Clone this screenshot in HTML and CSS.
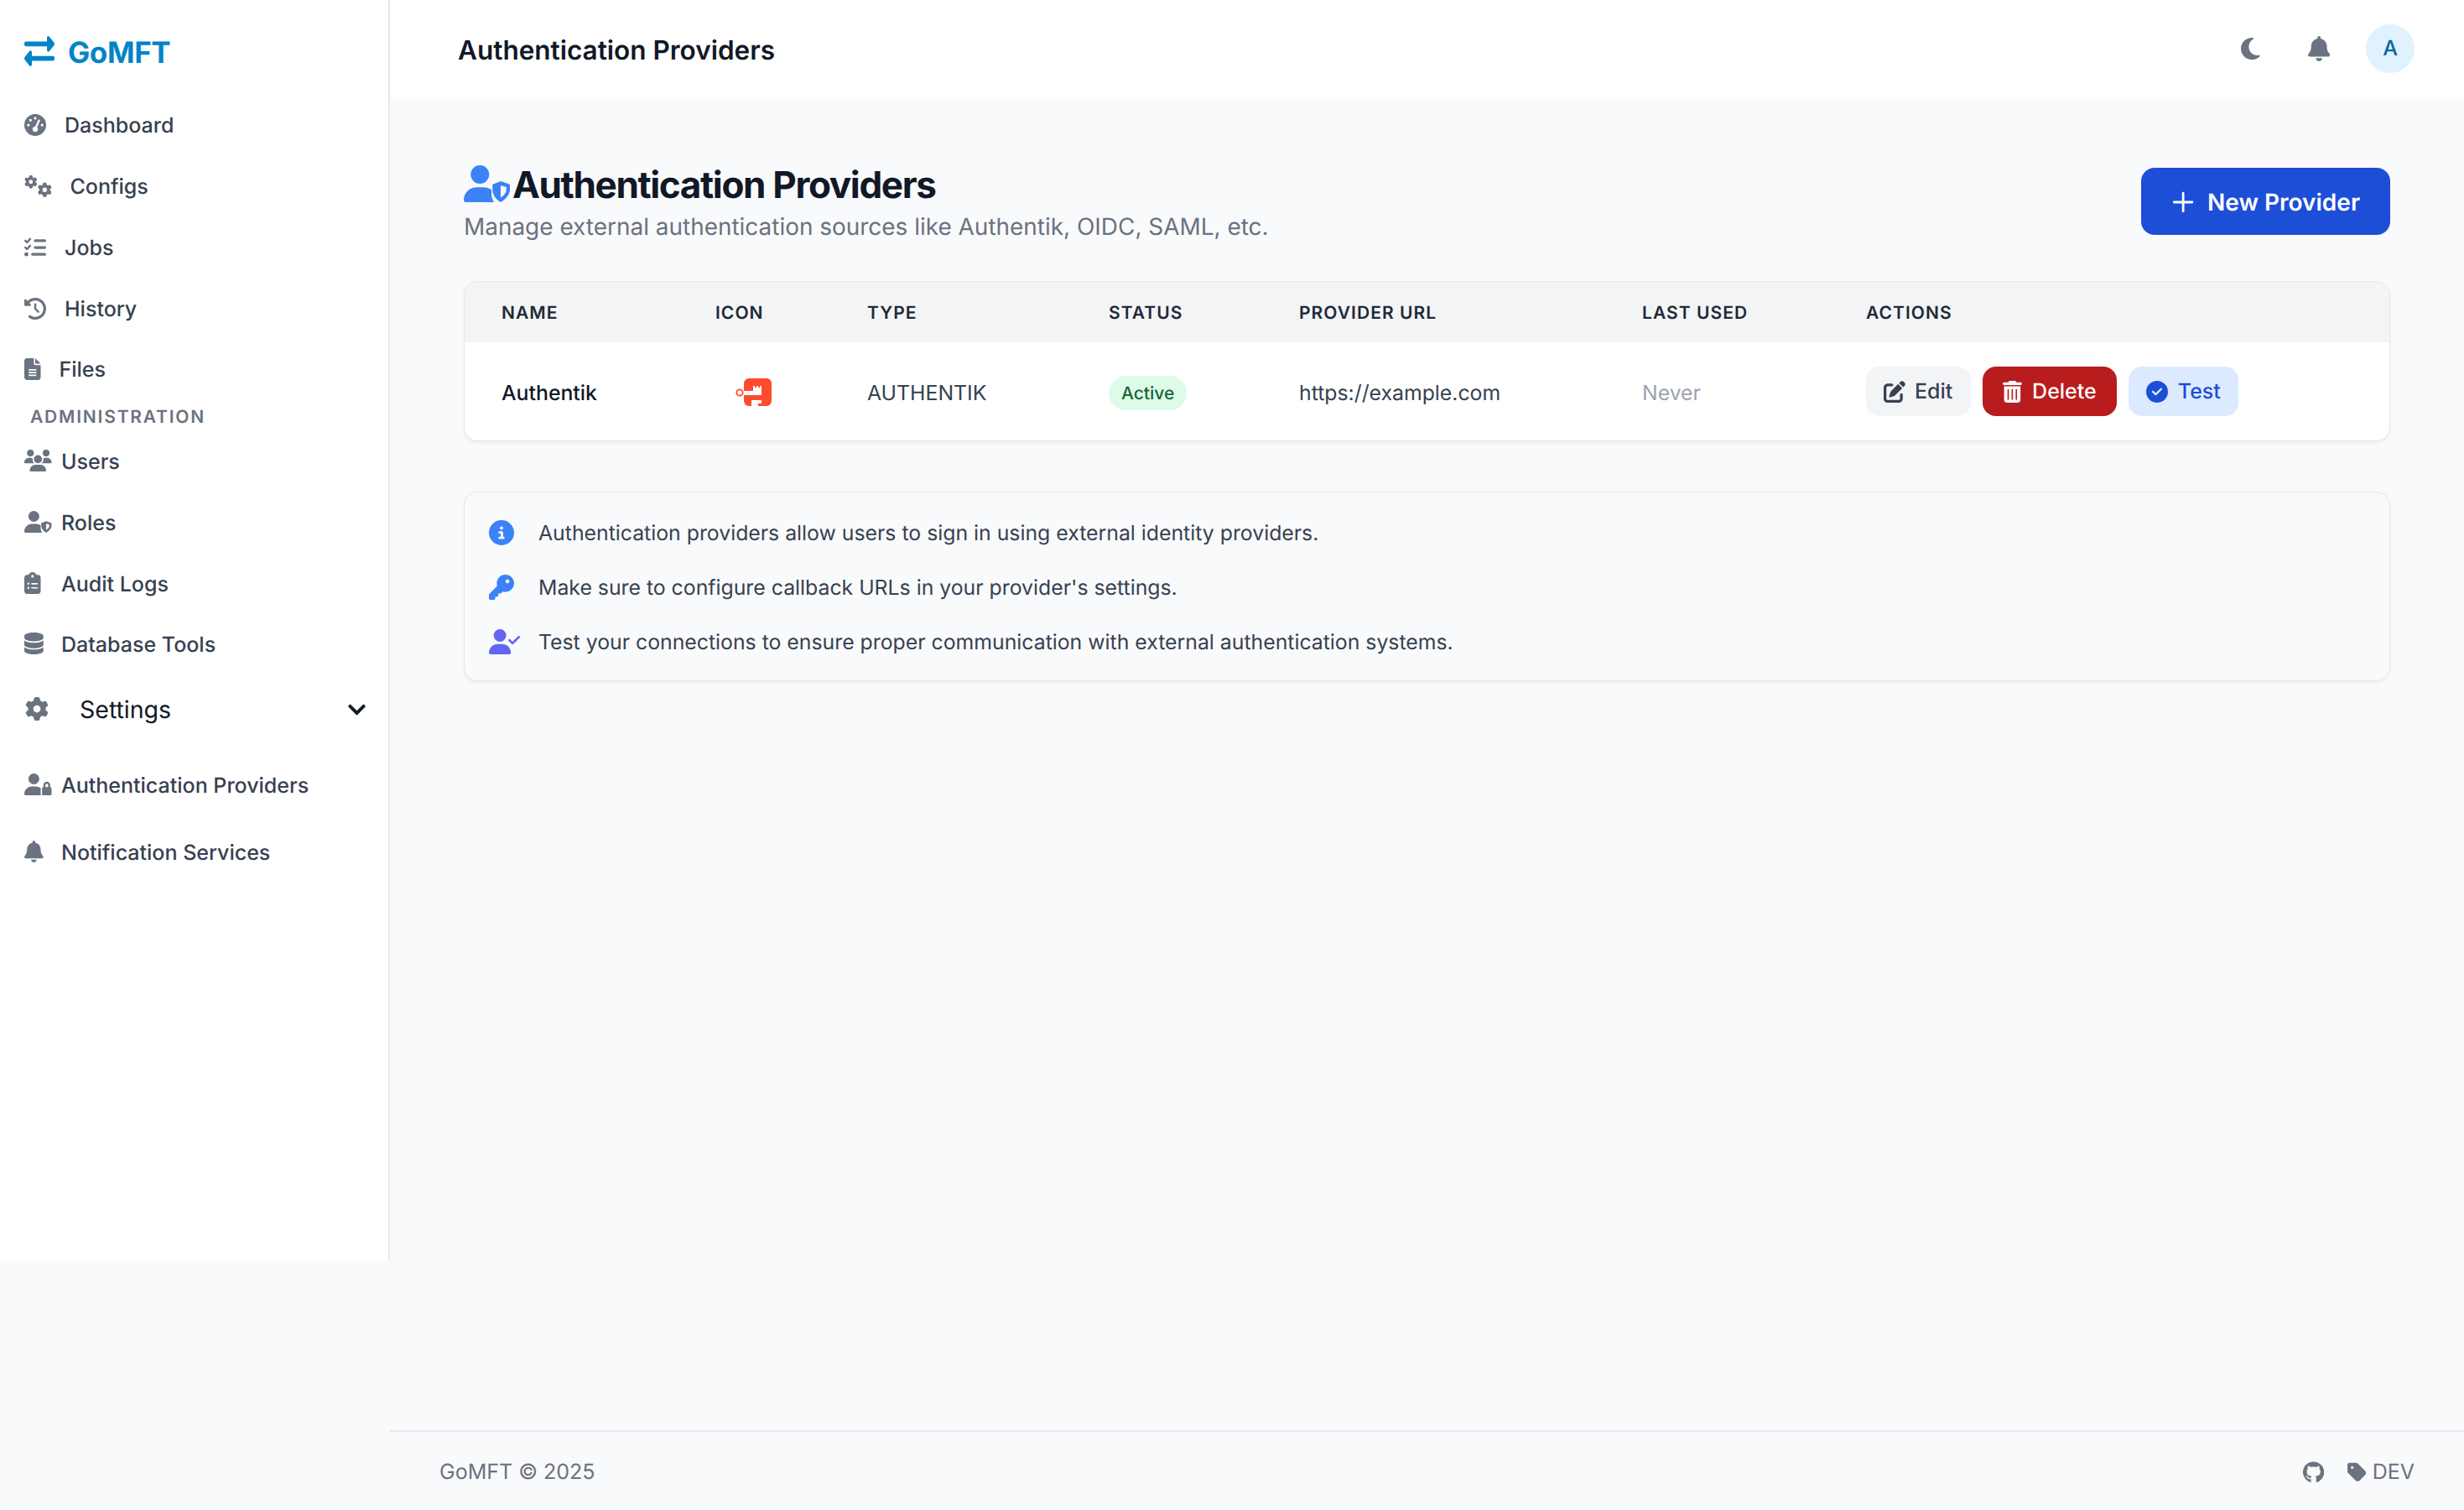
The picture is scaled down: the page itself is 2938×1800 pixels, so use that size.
FILE: index.html
```html
<!DOCTYPE html>
<html lang="en">
<head>
<meta charset="utf-8">
<title>Authentication Providers - GoMFT</title>
<link rel="stylesheet" href="styles.css">
</head>
<body>
<aside class="sidebar">
  <div class="brand">
    <svg class="brand-icon" viewBox="0 56 512 400" preserveAspectRatio="none"><path d="M0 168v-16c0-13.255 10.745-24 24-24h360V80c0-21.367 25.899-32.042 40.971-16.971l80 80c9.372 9.373 9.372 24.569 0 33.941l-80 80C409.956 271.982 384 261.456 384 240v-48H24c-13.255 0-24-10.745-24-24zm488 152H128v-48c0-21.314-25.862-32.08-40.971-16.971l-80 80c-9.372 9.373-9.372 24.569 0 33.941l80 80C102.057 463.997 128 453.437 128 432v-48h360c13.255 0 24-10.745 24-24v-16c0-13.255-10.745-24-24-24z"/></svg>
    <span>GoMFT</span>
  </div>
  <nav class="nav">
    <a class="nav-item"><svg class="nav-icon" viewBox="0 0 512 512"><path d="M0 256a256 256 0 1 1 512 0A256 256 0 1 1 0 256zM288 96a32 32 0 1 0 -64 0 32 32 0 1 0 64 0zM256 416c35.3 0 64-28.7 64-64c0-17.4-6.9-33.1-18.1-44.6L366 161.7c5.3-12.1-.2-26.3-12.3-31.6s-26.3 .2-31.6 12.3L257.9 288c-.6 0-1.3 0-1.9 0c-35.3 0-64 28.7-64 64s28.7 64 64 64zM176 144a32 32 0 1 0 -64 0 32 32 0 1 0 64 0zM96 288a32 32 0 1 0 0-64 32 32 0 1 0 0 64zm352-32a32 32 0 1 0 -64 0 32 32 0 1 0 64 0z"/></svg>Dashboard</a>
    <a class="nav-item"><svg class="nav-icon" viewBox="0 0 640 512"><defs><path id="gear" d="M495.9 166.6c3.2 8.7 .5 18.4-6.4 24.6l-43.3 39.4c1.1 8.3 1.7 16.8 1.7 25.4s-.6 17.1-1.7 25.4l43.3 39.4c6.9 6.2 9.6 15.9 6.4 24.6c-4.4 11.9-9.7 23.3-15.8 34.3l-4.7 8.1c-6.6 11-14 21.4-22.1 31.2c-5.9 7.2-15.7 9.6-24.5 6.8l-55.7-17.7c-13.4 10.3-28.2 18.9-44 25.4l-12.5 57.1c-2 9.1-9 16.3-18.2 17.8c-13.8 2.3-28 3.5-42.5 3.5s-28.7-1.2-42.5-3.5c-9.2-1.5-16.2-8.7-18.2-17.8l-12.5-57.1c-15.8-6.5-30.6-15.1-44-25.4L83.1 425.9c-8.8 2.8-18.6 .3-24.5-6.8c-8.1-9.8-15.5-20.2-22.1-31.2l-4.7-8.1c-6.1-11-11.4-22.4-15.8-34.3c-3.2-8.7-.5-18.4 6.4-24.6l43.3-39.4C64.6 273.1 64 264.6 64 256s.6-17.1 1.7-25.4L22.4 191.2c-6.9-6.2-9.6-15.9-6.4-24.6c4.4-11.9 9.7-23.3 15.8-34.3l4.7-8.1c6.6-11 14-21.4 22.1-31.2c5.9-7.2 15.7-9.6 24.5-6.8l55.7 17.7c13.4-10.3 28.2-18.9 44-25.4l12.5-57.1c2-9.1 9-16.3 18.2-17.8C227.3 1.2 241.5 0 256 0s28.7 1.2 42.5 3.5c9.2 1.5 16.2 8.7 18.2 17.8l12.5 57.1c15.8 6.5 30.6 15.1 44 25.4l55.7-17.7c8.8-2.8 18.6-.3 24.5 6.8c8.1 9.8 15.5 20.2 22.1 31.2l4.7 8.1c6.1 11 11.4 22.4 15.8 34.3zM256 336a80 80 0 1 0 0-160 80 80 0 1 0 0 160z"/></defs><use href="#gear" transform="translate(0 0) scale(.6)"/><use href="#gear" transform="translate(310 170) scale(.66)"/></svg>Configs</a>
    <a class="nav-item"><svg class="nav-icon" viewBox="0 0 512 512"><path d="M152.1 38.2c9.9 8.9 10.7 24 1.8 33.9l-72 80c-4.4 4.9-10.6 7.8-17.2 7.9s-12.9-2.4-17.6-7L7 113C-2.3 103.6-2.3 88.4 7 79s24.6-9.4 33.9 0l22.1 22.1 55.1-61.2c8.9-9.9 24-10.7 33.9-1.8zm0 160c9.9 8.9 10.7 24 1.8 33.9l-72 80c-4.4 4.9-10.6 7.8-17.2 7.9s-12.9-2.4-17.6-7L7 273c-9.4-9.4-9.4-24.6 0-33.9s24.6-9.4 33.9 0l22.1 22.1 55.1-61.2c8.9-9.9 24-10.7 33.9-1.8zM224 96c0-17.7 14.3-32 32-32H480c17.7 0 32 14.3 32 32s-14.3 32-32 32H256c-17.7 0-32-14.3-32-32zm0 160c0-17.7 14.3-32 32-32H480c17.7 0 32 14.3 32 32s-14.3 32-32 32H256c-17.7 0-32-14.3-32-32zM160 416c0-17.7 14.3-32 32-32H480c17.7 0 32 14.3 32 32s-14.3 32-32 32H192c-17.7 0-32-14.3-32-32zM48 368a48 48 0 1 1 0 96 48 48 0 1 1 0-96z"/></svg>Jobs</a>
    <a class="nav-item"><svg class="nav-icon" viewBox="0 0 512 512"><path d="M75 75L41 41C25.9 25.9 0 36.6 0 57.9V168c0 13.3 10.7 24 24 24H134.1c21.4 0 32.1-25.9 17-41l-30.8-30.8C155 85.5 203 64 256 64c106 0 192 86 192 192s-86 192-192 192c-40.8 0-78.6-12.7-109.7-34.4c-14.5-10.1-34.4-6.6-44.6 7.9s-6.6 34.4 7.9 44.6C151.2 495 201.7 512 256 512c141.4 0 256-114.6 256-256S397.4 0 256 0C185.3 0 121.3 28.7 75 75zm181 53c-13.3 0-24 10.7-24 24V256c0 6.4 2.5 12.5 7 17l72 72c9.4 9.4 24.6 9.4 33.9 0s9.4-24.6 0-33.9l-65-65V152c0-13.3-10.7-24-24-24z"/></svg>History</a>
    <a class="nav-item"><svg class="nav-icon" viewBox="0 0 384 512"><path d="M64 0C28.7 0 0 28.7 0 64V448c0 35.3 28.7 64 64 64H320c35.3 0 64-28.7 64-64V160H256c-17.7 0-32-14.3-32-32V0H64zM256 0V128H384L256 0zM112 256H272c8.8 0 16 7.2 16 16s-7.2 16-16 16H112c-8.8 0-16-7.2-16-16s7.2-16 16-16zm0 64H272c8.8 0 16 7.2 16 16s-7.2 16-16 16H112c-8.8 0-16-7.2-16-16s7.2-16 16-16zm0 64H272c8.8 0 16 7.2 16 16s-7.2 16-16 16H112c-8.8 0-16-7.2-16-16s7.2-16 16-16z"/></svg>Files</a>
    <div class="nav-label">ADMINISTRATION</div>
    <a class="nav-item fixed"><span class="icon-box"><svg class="nav-icon" viewBox="0 0 640 512"><path d="M144 0a80 80 0 1 1 0 160A80 80 0 1 1 144 0zM512 0a80 80 0 1 1 0 160A80 80 0 1 1 512 0zM0 298.7C0 239.8 47.8 192 106.7 192h42.7c15.9 0 31 3.5 44.6 9.7c-1.3 7.2-1.9 14.7-1.9 22.3c0 38.2 16.8 72.5 43.3 96c-.2 0-.4 0-.7 0H21.3C9.6 320 0 310.4 0 298.7zM405.3 320c-.2 0-.4 0-.7 0c26.6-23.5 43.3-57.8 43.3-96c0-7.6-.7-15-1.9-22.3c13.6-6.3 28.7-9.7 44.6-9.7h42.7C592.2 192 640 239.8 640 298.7c0 11.8-9.6 21.3-21.3 21.3H405.3zM224 224a96 96 0 1 1 192 0 96 96 0 1 1 -192 0zM128 485.3C128 411.7 187.7 352 261.3 352H378.7C452.3 352 512 411.7 512 485.3c0 14.7-11.9 26.7-26.7 26.7H154.7c-14.7 0-26.7-11.9-26.7-26.7z"/></svg></span>Users</a>
    <a class="nav-item fixed"><span class="icon-box"><svg class="nav-icon" viewBox="0 0 640 512"><path d="M224 256A128 128 0 1 0 224 0a128 128 0 1 0 0 256zm-45.7 48C79.8 304 0 383.8 0 482.3C0 498.7 13.3 512 29.7 512H420c-22-30-36-70-36-115V340c-30-22-70-36-114-36H178.3z"/><path fill-rule="evenodd" d="M512 240L408 282c-6 2-10 8-10 15v50c0 70 50 130 114 165 64-35 128-95 128-165v-50c0-7-4-13-10-15zM512 298v150c38-22 78-58 78-101v-24z"/></svg></span>Roles</a>
    <a class="nav-item fixed"><span class="icon-box"><svg class="nav-icon" viewBox="0 0 384 512"><path d="M192 0c-41.8 0-77.4 26.7-90.5 64H64C28.7 64 0 92.7 0 128V448c0 35.3 28.7 64 64 64H320c35.3 0 64-28.7 64-64V128c0-35.3-28.7-64-64-64H282.5C269.4 26.7 233.8 0 192 0zm0 64a32 32 0 1 1 0 64 32 32 0 1 1 0-64zM72 272a24 24 0 1 1 48 0 24 24 0 1 1 -48 0zm104-16H304c8.8 0 16 7.2 16 16s-7.2 16-16 16H176c-8.8 0-16-7.2-16-16s7.2-16 16-16zM72 368a24 24 0 1 1 48 0 24 24 0 1 1 -48 0zm88 0c0-8.8 7.2-16 16-16H304c8.8 0 16 7.2 16 16s-7.2 16-16 16H176c-8.8 0-16-7.2-16-16z"/></svg></span>Audit Logs</a>
    <a class="nav-item fixed"><span class="icon-box"><svg class="nav-icon" viewBox="0 0 448 512"><path d="M448 80v48c0 44.2-100.3 80-224 80S0 172.2 0 128V80C0 35.8 100.3 0 224 0S448 35.8 448 80zM393.2 214.7c20.8-7.4 39.9-16.9 54.8-28.6V288c0 44.2-100.3 80-224 80S0 332.2 0 288V186.1c14.9 11.8 34 21.2 54.8 28.6C99.7 230.7 159.5 240 224 240s124.3-9.3 169.2-25.3zM0 346.1c14.9 11.8 34 21.2 54.8 28.6C99.7 390.7 159.5 400 224 400s124.3-9.3 169.2-25.3c20.8-7.4 39.9-16.9 54.8-28.6V432c0 44.2-100.3 80-224 80S0 476.2 0 432V346.1z"/></svg></span>Database Tools</a>
    <div class="nav-group">
      <svg class="group-icon" viewBox="0 0 512 512"><use href="#gear"/></svg>
      <span class="group-text">Settings</span>
      <svg class="chevron" viewBox="0 0 448 512"><path d="M207.029 381.476L12.686 187.132c-9.373-9.373-9.373-24.569 0-33.941l22.667-22.667c9.357-9.357 24.522-9.375 33.901-.04L224 284.505l154.745-154.021c9.379-9.335 24.544-9.317 33.901.04l22.667 22.667c9.373 9.373 9.373 24.569 0 33.941L240.971 381.476c-9.373 9.372-24.569 9.372-33.942 0z"/></svg>
    </div>
    <div class="sub-nav">
      <a class="nav-item fixed tall"><span class="icon-box"><svg class="nav-icon" viewBox="0 0 640 512"><path d="M224 256A128 128 0 1 0 224 0a128 128 0 1 0 0 256zm-45.7 48C79.8 304 0 383.8 0 482.3C0 498.7 13.3 512 29.7 512H392.6c-5.4-9.4-8.6-20.3-8.6-32V352c0-2.1 .1-4.2 .3-6.3c-31-26-71-41.7-114.6-41.7H178.3zM528 240c17.7 0 32 14.3 32 32v48H496V272c0-17.7 14.3-32 32-32zm-80 32v48c-17.7 0-32 14.3-32 32V480c0 17.7 14.3 32 32 32H608c17.7 0 32-14.3 32-32V352c0-17.7-14.3-32-32-32V272c0-44.2-35.8-80-80-80s-80 35.8-80 80z"/></svg></span>Authentication Providers</a>
      <a class="nav-item fixed tall"><span class="icon-box"><svg class="nav-icon" viewBox="0 0 448 512"><path d="M224 0c-17.7 0-32 14.3-32 32V51.2C119 66 64 130.6 64 208v18.8c0 47-17.3 92.4-48.5 127.6l-7.4 8.3c-8.4 9.4-10.4 22.9-5.3 34.4S19.4 416 32 416H416c12.6 0 24-7.4 29.2-18.9s3.1-25-5.3-34.4l-7.4-8.3C401.3 319.2 384 273.9 384 226.8V208c0-77.4-55-142-128-156.8V32c0-17.7-14.3-32-32-32zm45.3 493.3c12-12 18.7-28.3 18.7-45.3H224 160c0 17 6.7 33.3 18.7 45.3s28.3 18.7 45.3 18.7s33.3-6.7 45.3-18.7z"/></svg></span>Notification Services</a>
    </div>
  </nav>
</aside>

<div class="main">
  <header class="topbar">
    <h2 class="topbar-title">Authentication Providers</h2>
    <div class="topbar-actions">
      <svg class="moon" viewBox="0 0 384 512"><path d="M223.5 32C100 32 0 132.3 0 256S100 480 223.5 480c60.6 0 115.5-24.2 155.8-63.4c5-4.9 6.3-12.5 3.1-18.7s-10.1-9.7-17-8.5c-9.8 1.7-19.8 2.6-30.1 2.6c-96.9 0-175.5-78.8-175.5-176c0-65.8 36-123.1 89.3-153.3c6.1-3.5 9.2-10.5 7.7-17.3s-7.3-11.9-14.3-12.5c-6.3-.5-12.6-.8-19-.8z"/></svg>
      <svg class="bell" viewBox="0 0 448 512"><path d="M224 0c-17.7 0-32 14.3-32 32V51.2C119 66 64 130.6 64 208v18.8c0 47-17.3 92.4-48.5 127.6l-7.4 8.3c-8.4 9.4-10.4 22.9-5.3 34.4S19.4 416 32 416H416c12.6 0 24-7.4 29.2-18.9s3.1-25-5.3-34.4l-7.4-8.3C401.3 319.2 384 273.9 384 226.8V208c0-77.4-55-142-128-156.8V32c0-17.7-14.3-32-32-32zm45.3 493.3c12-12 18.7-28.3 18.7-45.3H224 160c0 17 6.7 33.3 18.7 45.3s28.3 18.7 45.3 18.7s33.3-6.7 45.3-18.7z"/></svg>
      <div class="avatar">A</div>
    </div>
  </header>

  <main class="content">
    <div class="page-head">
      <div>
        <h1 class="page-title"><svg class="title-icon" viewBox="0 0 640 512"><path d="M224 256A128 128 0 1 0 224 0a128 128 0 1 0 0 256zm-45.7 48C79.8 304 0 383.8 0 482.3C0 498.7 13.3 512 29.7 512H420c-22-30-36-70-36-115V340c-30-22-70-36-114-36H178.3z"/><path fill-rule="evenodd" d="M512 220L408 262c-6 2-10 8-10 15v60c0 70 50 140 114 175 64-35 128-105 128-175v-60c0-7-4-13-10-15zM512 278v170c38-22 78-68 78-111v-34z"/></svg>Authentication Providers</h1>
        <p class="page-sub">Manage external authentication sources like Authentik, OIDC, SAML, etc.</p>
      </div>
      <button class="btn-new"><svg class="plus" viewBox="0 0 448 512"><path d="M248 72c0-13.3-10.7-24-24-24s-24 10.7-24 24V232H40c-13.3 0-24 10.7-24 24s10.7 24 24 24H200V440c0 13.3 10.7 24 24 24s24-10.7 24-24V280H408c13.300 0 24-10.700 24-24s-10.700-24-24-24H248V72z"/></svg>New Provider</button>
    </div>

    <div class="card table-card">
      <table class="table">
        <colgroup>
          <col class="c-name"><col class="c-icon"><col class="c-type"><col class="c-status"><col class="c-url"><col class="c-used"><col class="c-actions">
        </colgroup>
        <thead>
          <tr><th>NAME</th><th>ICON</th><th>TYPE</th><th>STATUS</th><th>PROVIDER URL</th><th>LAST USED</th><th>ACTIONS</th></tr>
        </thead>
        <tbody>
          <tr>
            <td class="cell-name">Authentik</td>
            <td><svg class="ak-logo" viewBox="0 0 48 34"><rect x="14" y="0" width="33" height="33" rx="6" fill="#fd4b2d"/><circle cx="9" cy="17" r="3.7" fill="none" stroke="#fd4b2d" stroke-width="1.8"/><path fill="#fff" d="M14 15h11V9h2v2h2V9h2v2h2V9h2v21h-4v3H23v-7h12v-6H14z"/></svg></td>
            <td>AUTHENTIK</td>
            <td><span class="badge">Active</span></td>
            <td>https://example.com</td>
            <td class="cell-muted">Never</td>
            <td>
              <div class="actions">
                <button class="btn btn-edit"><svg class="btn-icon" viewBox="0 0 512 512"><path d="M471.6 21.7c-21.9-21.9-57.3-21.9-79.2 0L362.3 51.7l97.9 97.9 30.1-30.1c21.9-21.9 21.9-57.3 0-79.2L471.6 21.7zm-299.2 220c-6.1 6.1-10.8 13.6-13.5 21.9l-29.6 88.8c-2.9 8.6-.6 18.1 5.8 24.6s15.9 8.7 24.6 5.8l88.8-29.6c8.2-2.7 15.7-7.4 21.9-13.5L437.7 172.3 339.7 74.3 172.4 241.7zM96 64C43 64 0 107 0 160V416c0 53 43 96 96 96H352c53 0 96-43 96-96V320c0-17.7-14.3-32-32-32s-32 14.3-32 32v96c0 17.7-14.3 32-32 32H96c-17.7 0-32-14.3-32-32V160c0-17.7 14.3-32 32-32h96c17.7 0 32-14.3 32-32s-14.3-32-32-32H96z"/></svg>Edit</button>
                <button class="btn btn-delete"><svg class="btn-icon" viewBox="0 0 448 512"><path d="M135.2 17.7C140.6 6.8 151.700 0 163.800 0H284.200c12.100 0 23.200 6.800 28.600 17.700L320 32h96c17.700 0 32 14.300 32 32s-14.300 32-32 32H32C14.300 96 0 81.700 0 64S14.300 32 32 32h96l7.200-14.300zM32 128H416V448c0 35.300-28.700 64-64 64H96c-35.300 0-64-28.700-64-64V128zm96 64c-8.800 0-16 7.200-16 16V432c0 8.800 7.200 16 16 16s16-7.200 16-16V208c0-8.800-7.200-16-16-16zm96 0c-8.800 0-16 7.200-16 16V432c0 8.800 7.200 16 16 16s16-7.200 16-16V208c0-8.800-7.200-16-16-16zm96 0c-8.800 0-16 7.200-16 16V432c0 8.800 7.200 16 16 16s16-7.200 16-16V208c0-8.800-7.200-16-16-16z"/></svg>Delete</button>
                <button class="btn btn-test"><svg class="btn-icon" viewBox="0 0 512 512"><path d="M256 512A256 256 0 1 0 256 0a256 256 0 1 0 0 512zM369 209L241 337c-9.400 9.400-24.600 9.400-33.900 0l-64-64c-9.400-9.400-9.400-24.600 0-33.900s24.600-9.400 33.900 0l47 47L335 175c9.400-9.400 24.600-9.400 33.900 0s9.400 24.600 0 33.900z"/></svg>Test</button>
              </div>
            </td>
          </tr>
        </tbody>
      </table>
    </div>

    <div class="card info-card">
      <div class="info-row"><span class="info-icon"><svg class="blue" viewBox="0 0 512 512"><path d="M256 512A256 256 0 1 0 256 0a256 256 0 1 0 0 512zM216 336h24V272H216c-13.300 0-24-10.700-24-24s10.700-24 24-24h48c13.300 0 24 10.700 24 24v88h8c13.300 0 24 10.700 24 24s-10.700 24-24 24H216c-13.300 0-24-10.700-24-24s10.700-24 24-24zm40-208a32 32 0 1 1 0 64 32 32 0 1 1 0-64z"/></svg></span>Authentication providers allow users to sign in using external identity providers.</div>
      <div class="info-row"><span class="info-icon"><svg class="blue" viewBox="0 0 512 512"><path d="M336 352c97.200 0 176-78.800 176-176S433.200 0 336 0S160 78.800 160 176c0 18.700 2.900 36.800 8.300 53.700L7 391c-4.500 4.500-7 10.600-7 17v80c0 13.300 10.700 24 24 24h80c13.300 0 24-10.700 24-24V448h40c13.300 0 24-10.700 24-24V384h40c6.400 0 12.500-2.500 17-7l33.300-33.300c16.900 5.400 35 8.300 53.700 8.300zM376 96a40 40 0 1 1 0 80 40 40 0 1 1 0-80z"/></svg></span>Make sure to configure callback URLs in your provider's settings.</div>
      <div class="info-row"><span class="info-icon"><svg class="indigo" viewBox="0 0 640 512"><path d="M96 128a128 128 0 1 1 256 0A128 128 0 1 1 96 128zM0 482.300C0 383.800 79.800 304 178.300 304h91.400C368.200 304 448 383.800 448 482.300c0 16.400-13.300 29.700-29.700 29.700H29.700C13.300 512 0 498.700 0 482.300zM625 177L497 305c-9.400 9.400-24.600 9.400-33.900 0l-64-64c-9.400-9.400-9.400-24.600 0-33.900s24.600-9.400 33.900 0l47 47L591 143c9.400-9.400 24.600-9.400 33.900 0s9.400 24.600 0 33.900z"/></svg></span>Test your connections to ensure proper communication with external authentication systems.</div>
    </div>
  </main>

  <footer class="footer">
    <span>GoMFT © 2025</span>
    <div class="footer-right">
      <svg class="gh" viewBox="0 0 496 512"><path d="M165.900 397.400c0 2-2.300 3.600-5.200 3.600-3.300 .3-5.600-1.300-5.600-3.600 0-2 2.300-3.600 5.200-3.600 3-.3 5.600 1.300 5.600 3.600zm-31.100-4.500c-.7 2 1.300 4.300 4.300 4.900 2.600 1 5.600 0 6.200-2s-1.300-4.300-4.300-5.200c-2.600-.7-5.500 .3-6.200 2.300zm44.200-1.700c-2.900 .7-4.900 2.600-4.600 4.900 .3 2 2.900 3.300 5.900 2.600 2.900-.7 4.900-2.600 4.600-4.600-.3-1.900-3-3.200-5.900-2.900zM244.800 8C106.100 8 0 113.300 0 252c0 110.900 69.800 205.800 169.500 239.200 12.800 2.300 17.300-5.600 17.300-12.100 0-6.200-.3-40.400-.3-61.400 0 0-70 15-84.700-29.800 0 0-11.400-29.100-27.800-36.600 0 0-22.900-15.700 1.600-15.400 0 0 24.900 2 38.600 25.800 21.900 38.600 58.600 27.500 72.900 20.900 2.300-16 8.800-27.100 16-33.700-55.900-6.200-112.300-14.300-112.300-110.500 0-27.500 7.600-41.300 23.600-58.900-2.600-6.500-11.100-33.300 2.600-67.900 20.900-6.500 69 27 69 27 20-5.600 41.500-8.500 62.800-8.500s42.800 2.900 62.800 8.500c0 0 48.100-33.600 69-27 13.700 34.700 5.200 61.400 2.600 67.900 16 17.700 25.800 31.500 25.800 58.900 0 96.500-58.900 104.200-114.800 110.500 9.200 7.900 17 22.900 17 46.400 0 33.700-.3 75.400-.3 83.600 0 6.500 4.600 14.400 17.300 12.100C428.200 457.800 496 362.900 496 252 496 113.300 383.500 8 244.800 8z"/></svg>
      <span class="version"><svg class="tag" viewBox="0 0 448 512"><path d="M0 80V229.500c0 17 6.700 33.300 18.700 45.300l176 176c25 25 65.500 25 90.500 0L418.700 317.300c25-25 25-65.500 0-90.500l-176-176c-12-12-28.300-18.700-45.300-18.700H48C21.500 32 0 53.500 0 80zm112 32a32 32 0 1 1 0 64 32 32 0 1 1 0-64z"/></svg>DEV</span>
    </div>
  </footer>
</div>
</body>
</html>
```

FILE: styles.css
```css
* { box-sizing: border-box; }
html, body { margin: 0; height: 100%; }
body {
  display: flex;
  align-items: flex-start;
  background: #f9fafb;
  font-family: Inter, "Noto Sans", sans-serif;
  font-size: 25px;
  color: #374151;
  overflow: hidden;
  text-rendering: geometricPrecision;
}
svg { display: block; flex: none; fill: currentColor; }
button { text-rendering: geometricPrecision; }

/* Sidebar */
.sidebar {
  flex: none;
  width: 465px;
  height: 1502px;
  background: #fff;
  border-right: 2px solid #e5e7eb;
}
.brand {
  display: flex;
  align-items: center;
  gap: 16px;
  height: 114px;
  padding: 11px 0 0 29px;
  color: #0284c7;
  font-size: 35px;
  font-weight: 700;
  letter-spacing: -0.4px;
}
.brand-icon { height: 36px; width: 36px; margin-top: -3px; }
.nav-item {
  display: flex;
  align-items: center;
  gap: 22px;
  height: 72.75px;
  padding-left: 29px;
  font-weight: 500;
  color: #374151;
}
.nav-icon { height: 26px; color: #6b7280; margin-top: -2px; }
.fixed { gap: 8px; }
.fixed .nav-icon { margin-top: -4px; }
.icon-box { width: 36px; flex: none; }
.tall { height: 80px; }
.nav-label {
  height: 37px;
  padding: 6px 0 0 36px;
  font-size: 21px;
  line-height: 28px;
  font-weight: 600;
  letter-spacing: 1.8px;
  color: #6b7280;
}
.nav-group {
  display: flex;
  align-items: center;
  height: 82px;
  padding: 0 27px 2px 30px;
  font-size: 28.5px;
  color: #111827;
}
.group-icon { height: 28px; color: #6b7280; margin-top: -2px; }
.group-text { flex: 1; margin-left: 37px; }
.chevron { height: 24px; color: #111827; }
.sub-nav { padding-top: 9px; }

/* Main */
.main {
  flex: 1;
  min-width: 0;
  height: 1800px;
  display: flex;
  flex-direction: column;
}
.topbar {
  flex: none;
  height: 116px;
  background: #fff;
  display: flex;
  align-items: center;
  justify-content: space-between;
  padding: 0 59px 0 81px;
}
.topbar-title {
  margin: 2px 0 0;
  font-size: 31.5px;
  font-weight: 600;
  color: #111827;
}
.topbar-actions { display: flex; align-items: center; }
.moon { height: 30px; color: #6b7280; margin-right: 57px; }
.bell { height: 30px; color: #6b7280; margin-right: 43px; }
.avatar {
  width: 58px;
  height: 58px;
  border-radius: 50%;
  background: #e0f2fe;
  color: #0369a1;
  font-size: 25px;
  font-weight: 500;
  display: flex;
  align-items: center;
  justify-content: center;
}

.content { flex: 1; padding: 80px 88px 0; }
.page-head {
  display: flex;
  justify-content: space-between;
  align-items: flex-start;
  margin-bottom: 43px;
}
.page-title {
  display: flex;
  align-items: center;
  gap: 3px;
  margin: 0;
  font-size: 44px;
  line-height: 48px;
  font-weight: 700;
  letter-spacing: -1.33px;
  color: #111827;
}
.title-icon { height: 44px; color: #3b82f6; margin-top: -3px; }
.page-sub {
  margin: 4px 0 0;
  font-size: 27.95px;
  line-height: 44px;
  color: #6b7280;
}
.btn-new {
  display: flex;
  align-items: center;
  gap: 16px;
  height: 80px;
  margin-top: 4px;
  padding: 1px 36px 0 37px;
  border: 0;
  border-radius: 16px;
  background: #1d4ed8;
  color: #fff;
  font: 600 28px Inter, sans-serif;
}
.plus { height: 30px; }

/* Cards */
.card {
  border: 1px solid #e5e7eb;
  border-radius: 16px;
  box-shadow: 0 2px 4px rgba(0, 0, 0, .05);
}
.table-card { background: #fff; overflow: hidden; }
.table { width: 100%; border-collapse: collapse; table-layout: fixed; }
.c-name { width: 255px; }
.c-icon { width: 181px; }
.c-type { width: 288px; }
.c-status { width: 227px; }
.c-url { width: 409px; }
.c-used { width: 267px; }
th {
  height: 72px;
  padding: 2px 0 0 44px;
  background: #f3f4f6;
  text-align: left;
  font-size: 21px;
  font-weight: 600;
  letter-spacing: 1.05px;
  color: #1f2937;
}
td {
  height: 117px;
  padding: 3px 0 0 44px;
  font-size: 24.8px;
  color: #374151;
}
.cell-name { font-weight: 500; color: #111827; }
.cell-muted { color: #9ca3af; }
.ak-logo { height: 34px; margin-left: 20px; }
.badge {
  display: inline-block;
  height: 41px;
  padding: 1px 15px 0;
  border-radius: 21px;
  background: #dcfce7;
  color: #166534;
  font-size: 21px;
  font-weight: 500;
  line-height: 41px;
}
.actions { display: flex; gap: 14px; margin-top: -3px; }
.btn {
  display: flex;
  align-items: center;
  gap: 12px;
  height: 59px;
  padding: 1px 22px 0;
  border: 0;
  border-radius: 16px;
  font: 500 25px Inter, sans-serif;
}
.btn-icon { height: 26px; margin-top: -1px; }
.btn-edit { background: #f3f4f6; color: #374151; gap: 11px; padding-left: 21px; }
.btn-delete { background: #b91c1c; color: #fff; padding-left: 24px; padding-right: 24px; }
.btn-test { background: #dbeafe; color: #1d4ed8; padding-left: 21px; padding-right: 21px; }

.info-card { margin-top: 60px; padding: 15px 29px 14px; }
.info-row { display: flex; align-items: center; height: 65px; padding-top: 1px; font-size: 24.8px; color: #374151; }
.info-icon { width: 59px; flex: none; margin-top: -1px; }
.info-icon svg { height: 30px; }
.blue { color: #3b82f6; }
.indigo { color: #6366f1; }

/* Footer */
.footer {
  flex: none;
  height: 95px;
  border-top: 2px solid #e5e7eb;
  display: flex;
  align-items: center;
  justify-content: space-between;
  padding: 3px 59px 0;
  color: #6b7280;
}
.footer-right { display: flex; align-items: center; gap: 28px; }
.gh { height: 26px; }
.version { display: flex; align-items: center; gap: 7px; }
.tag { height: 26px; }
```
